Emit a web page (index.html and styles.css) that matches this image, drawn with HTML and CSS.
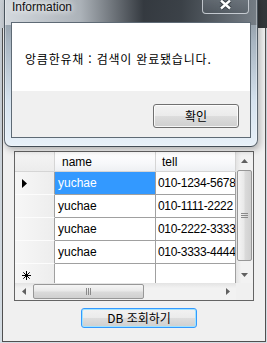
FILE: index.html
```html
<!DOCTYPE html>
<html lang="ko">
<head>
    <meta charset="UTF-8">
    <title>DB 조회</title>
    <link rel="stylesheet" href="styles.css">
</head>
<body>
    <div class="form-window">
        <div class="form-caption"></div>
        <div class="form-client">
            <div class="grid">
                <div class="grid-data">
                    <div class="row head">
                        <div class="cell c-rh corner"></div>
                        <div class="cell c-name">name</div>
                        <div class="cell c-tel">tell</div>
                    </div>
                    <div class="row">
                        <div class="cell c-rh">
                            <svg width="6" height="9" viewBox="0 0 6 9"><polygon points="0,0 5,4.5 0,9" fill="#000"/></svg>
                        </div>
                        <div class="cell c-name selected">yuchae</div>
                        <div class="cell c-tel">010-1234-5678</div>
                    </div>
                    <div class="row">
                        <div class="cell c-rh"></div>
                        <div class="cell c-name">yuchae</div>
                        <div class="cell c-tel">010-1111-2222</div>
                    </div>
                    <div class="row">
                        <div class="cell c-rh"></div>
                        <div class="cell c-name">yuchae</div>
                        <div class="cell c-tel">010-2222-3333</div>
                    </div>
                    <div class="row">
                        <div class="cell c-rh"></div>
                        <div class="cell c-name">yuchae</div>
                        <div class="cell c-tel">010-3333-4444</div>
                    </div>
                    <div class="row new-row">
                        <div class="cell c-rh">
                            <svg width="9" height="9" viewBox="0 0 9 9" stroke="#000" stroke-width="1">
                                <path d="M4.5 0V9M0 4.5H9M1.3 1.3L7.7 7.7M7.7 1.3L1.3 7.7"/>
                            </svg>
                        </div>
                        <div class="cell c-name"></div>
                        <div class="cell c-tel"></div>
                    </div>
                </div>

                <div class="vscroll">
                    <div class="arrow">
                        <svg width="7" height="4" viewBox="0 0 7 4"><polygon points="3.5,0 7,4 0,4" fill="#606060"/></svg>
                    </div>
                    <div class="thumb v-thumb">
                        <svg width="7" height="6" viewBox="0 0 7 6" stroke="#8a8a8a"><path d="M0 0.5H7M0 2.5H7M0 4.5H7"/></svg>
                    </div>
                    <div class="track"></div>
                    <div class="arrow">
                        <svg width="7" height="4" viewBox="0 0 7 4"><polygon points="0,0 7,0 3.5,4" fill="#606060"/></svg>
                    </div>
                </div>

                <div class="hscroll">
                    <div class="arrow">
                        <svg width="4" height="7" viewBox="0 0 4 7"><polygon points="4,0 4,7 0,3.5" fill="#606060"/></svg>
                    </div>
                    <div class="thumb h-thumb">
                        <svg width="6" height="7" viewBox="0 0 6 7" stroke="#8a8a8a"><path d="M0.5 0V7M2.5 0V7M4.5 0V7"/></svg>
                    </div>
                    <div class="track"></div>
                    <div class="arrow">
                        <svg width="4" height="7" viewBox="0 0 4 7"><polygon points="0,0 4,3.5 0,7" fill="#606060"/></svg>
                    </div>
                </div>

                <div class="scroll-corner"></div>
            </div>

            <div class="actions">
                <button class="btn btn-default" type="button">DB 조회하기</button>
            </div>
        </div>
    </div>

    <div class="dialog">
        <div class="dialog-caption">
            <span class="dialog-title">Information</span>
        </div>
        <div class="close-btn">
            <svg width="13" height="11" viewBox="0 0 13 11">
                <path d="M2 1.5L11 9.5M11 1.5L2 9.5" stroke="#3a3f45" stroke-width="4.4"/>
                <path d="M2 1.5L11 9.5M11 1.5L2 9.5" stroke="#fff" stroke-width="2.4"/>
            </svg>
        </div>
        <div class="dialog-client">
            <div class="message">앙큼한유채 : 검색이 완료됐습니다.</div>
            <div class="dialog-buttons">
                <button class="btn btn-ok" type="button">확인</button>
            </div>
        </div>
    </div>
</body>
</html>
```

FILE: styles.css
```css
* {
    margin: 0;
    padding: 0;
    box-sizing: border-box;
}

body {
    width: 267px;
    height: 343px;
    overflow: hidden;
    position: relative;
    font-family: 'Liberation Sans', 'Noto Sans CJK KR', sans-serif;
    font-size: 12px;
    color: #000;
    background: #c7ced5;
}

/* background form */
.form-window {
    height: 343px;
    display: flex;
    flex-direction: column;
    background: linear-gradient(to bottom, #c2c9d0, #d5dde4);
}

.form-caption {
    height: 28px;
    flex: none;
    background: linear-gradient(to right, #c8ced4 0%, #9aa2aa 40%, #3a3e43 80%, #33373b 100%);
}

.form-client {
    flex: 1;
    margin: 0 1px 1px 2px;
    border: 1px solid #505050;
    border-top: none;
    background: #f0f0f0;
    padding: 123px 0 0 11px;
}

/* data grid */
.grid {
    width: 240px;
    height: 150px;
    border: 1px solid #646464;
    background: #fff;
    display: grid;
    grid-template-columns: 221px 17px;
    grid-template-rows: 131px 17px;
}

.grid-data {
    overflow: hidden;
}

.row {
    display: flex;
    height: 23px;
}

.row.head {
    height: 20px;
}

.cell {
    height: 100%;
    border-right: 1px solid #a0a0a0;
    border-bottom: 1px solid #a0a0a0;
    display: flex;
    align-items: center;
    white-space: nowrap;
    overflow: hidden;
    line-height: 14px;
}

.c-rh {
    width: 40px;
    padding-left: 7px;
    background: linear-gradient(to right, #f7f7f7, #ededed);
    border-bottom-color: #fcfcfc;
    border-right-color: #a0a0a0;
}

.c-name {
    width: 101px;
    padding-left: 3px;
}

.c-tel {
    width: 80px;
    padding-left: 2px;
    letter-spacing: -0.3px;
}

.head .cell {
    background: linear-gradient(to bottom, #ffffff, #f7f8fa 60%, #eef0f3);
    border-bottom-color: #d5d5d5;
    border-right-color: #d5d5d5;
}

.head .c-name {
    padding-left: 7px;
}

.head .c-tel {
    padding-left: 6px;
    letter-spacing: 0;
}

.head .corner {
    background: linear-gradient(to bottom, #f5f5f5, #ececec);
    border-right-color: #d5d5d5;
}

.selected {
    background: #3399ff;
    color: #fff;
}

.new-row .c-rh svg {
    margin-top: 1px;
}

/* scroll bars */
.vscroll {
    display: flex;
    flex-direction: column;
    background: linear-gradient(to right, #e3e3e3, #f2f2f2 30%, #f2f2f2);
}

.hscroll {
    display: flex;
    background: linear-gradient(to bottom, #e3e3e3, #f2f2f2 30%, #f2f2f2);
}

.arrow {
    width: 17px;
    height: 17px;
    flex: none;
    display: flex;
    align-items: center;
    justify-content: center;
}

.vscroll .track,
.hscroll .track {
    flex: 1;
}

.thumb {
    flex: none;
    border: 1px solid #979797;
    border-radius: 2px;
    display: flex;
    align-items: center;
    justify-content: center;
}

.v-thumb {
    height: 91px;
    margin: 1px 1px 0 1px;
    background: linear-gradient(to right, #f5f5f5, #e9e9e9 45%, #dadada 55%, #d0d0d0);
}

.h-thumb {
    width: 111px;
    margin: 1px 0 1px 1px;
    background: linear-gradient(to bottom, #f5f5f5, #e9e9e9 45%, #dadada 55%, #d0d0d0);
}

.scroll-corner {
    background: #f0f0f0;
}

/* buttons */
.actions {
    padding: 7px 0 0 67px;
}

.btn {
    font-family: 'Noto Sans CJK KR', 'Liberation Sans', sans-serif;
    font-size: 12px;
    line-height: 14px;
    color: #000;
    border: 1px solid #707070;
    border-radius: 3px;
    background: linear-gradient(to bottom, #f2f2f2 0%, #ebebeb 49%, #dddddd 50%, #cfcfcf 100%);
    box-shadow: inset 0 0 0 1px rgba(255, 255, 255, 0.8);
}

.btn-default {
    width: 116px;
    height: 20px;
    border-color: #3399ff;
    box-shadow: inset 0 0 0 1px #9ee3ff;
}

.btn-ok {
    width: 86px;
    height: 24px;
}

/* message box overlay */
.dialog {
    position: absolute;
    left: 4px;
    top: -6px;
    width: 254px;
    height: 153px;
    padding: 0 6px 8px;
    border: 1px solid rgba(50, 60, 70, 0.75);
    border-radius: 7px;
    display: flex;
    flex-direction: column;
    background:
        linear-gradient(to right, rgba(215, 220, 225, 0.95) 0%, rgba(175, 181, 187, 0.9) 30%, rgba(48, 53, 59, 0.95) 55%, rgba(55, 61, 67, 0.95) 70%, rgba(115, 123, 131, 0.9) 100%) top / 100% 30px no-repeat,
        linear-gradient(to bottom, #7b848c 0%, #a7b4c0 30%, #d5e2ee 70%, #e8f1f9 100%);
    box-shadow: 0 0 0 1px rgba(255, 255, 255, 0.35) inset, 2px 3px 6px rgba(0, 0, 0, 0.25);
}

.dialog-caption {
    height: 27px;
    flex: none;
    padding: 5px 0 0 1px;
}

.dialog-title {
    font-family: 'Liberation Sans', sans-serif;
    font-size: 12px;
    line-height: 15px;
    color: #111;
    text-shadow: 0 0 6px #fff, 0 0 10px rgba(255, 255, 255, 0.8);
}

.close-btn {
    position: absolute;
    left: 197px;
    top: 0;
    width: 47px;
    height: 19px;
    border: 1px solid rgba(235, 240, 245, 0.7);
    border-top: none;
    border-radius: 0 0 4px 4px;
    background: linear-gradient(to bottom, rgba(120, 128, 136, 0.55), rgba(80, 88, 96, 0.55));
    display: flex;
    align-items: center;
    justify-content: center;
}

.dialog-client {
    height: 116px;
    border: 1px solid #5e6a75;
    background: #fff;
    display: flex;
    flex-direction: column;
}

.message {
    height: 68px;
    flex: none;
    padding: 28px 0 0 13px;
    font-family: 'Noto Sans CJK KR', sans-serif;
    font-size: 12px;
    line-height: 16px;
    letter-spacing: 0.8px;
    color: #000;
}

.dialog-buttons {
    flex: 1;
    background: #f0f0f0;
    display: flex;
    justify-content: flex-end;
    padding: 13px 11px 0 0;
}
```
